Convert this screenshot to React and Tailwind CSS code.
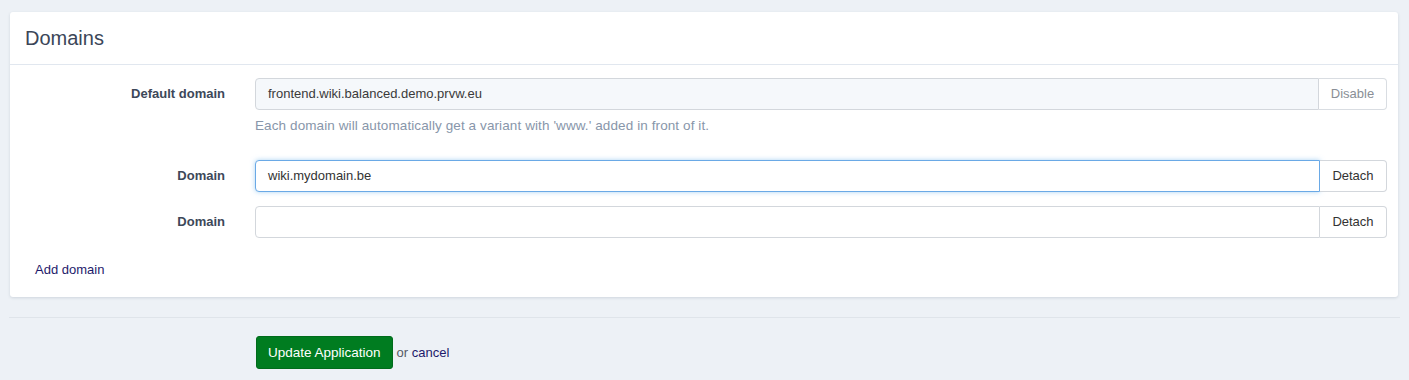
import React from "react";

export default function App() {
  const font = { fontFamily: '"Liberation Sans", Arial, Helvetica, sans-serif' };
  return (
    <div className="w-[1409px] h-[380px] bg-[#edf1f6] text-[13px] text-[#333]" style={font}>
      <div className="pt-[12px] px-[10px] pr-[11px]">
        <div className="bg-white rounded-[3px] shadow-[0_1px_3px_rgba(40,60,90,0.15)]">
          <div className="h-[53px] border-b border-[#e1e7ef] flex items-center pl-[15px]">
            <h2 className="text-[20px] text-[#3b4658] leading-none">Domains</h2>
          </div>
          <div className="pt-[13px] pb-[19px]">
            <div className="flex items-start">
              <label className="w-[215px] text-right font-bold text-[#3d4859] leading-[32px]">Default domain</label>
              <div className="ml-[30px] flex-1 mr-[11px]">
                <div className="flex h-[32px]">
                  <div className="flex-1 border border-[#d3d7dc] rounded-l-[4px] bg-[#f5f8fb] pl-[12px] flex items-center text-[#3a3a3a]">
                    frontend.wiki.balanced.demo.prvw.eu
                  </div>
                  <button className="w-[68px] border border-l-0 border-[#d9dde2] rounded-r-[4px] bg-white text-[#8a8f96] text-[13px]">Disable</button>
                </div>
                <p className="mt-[8px] text-[13.5px] tracking-[0.1px] text-[#8896aa] leading-[15px]">Each domain will automatically get a variant with 'www.' added in front of it.</p>
              </div>
            </div>
            <div className="flex items-start mt-[27px]">
              <label className="w-[215px] text-right font-bold text-[#3d4859] leading-[32px]">Domain</label>
              <div className="ml-[30px] flex-1 mr-[11px] flex h-[32px]">
                <div className="flex-1 border border-[#6aa9e6] rounded-l-[4px] bg-white pl-[12px] flex items-center text-[#333] shadow-[0_0_5px_rgba(102,175,233,0.55)]">
                  wiki.mydomain.be
                </div>
                <button className="w-[67px] border border-[#d3d7dc] border-l-0 rounded-r-[4px] bg-white text-[#333] text-[13px]">Detach</button>
              </div>
            </div>
            <div className="flex items-start mt-[14px]">
              <label className="w-[215px] text-right font-bold text-[#3d4859] leading-[32px]">Domain</label>
              <div className="ml-[30px] flex-1 mr-[11px] flex h-[32px]">
                <div className="flex-1 border border-[#d3d7dc] rounded-l-[4px] bg-white"></div>
                <button className="w-[67px] border border-[#d3d7dc] border-l-0 rounded-r-[4px] bg-white text-[#333] text-[13px]">Detach</button>
              </div>
            </div>
            <div className="pl-[25px] mt-[24px] leading-[16px]">
              <a className="text-[#1d1a6b] cursor-pointer">Add domain</a>
            </div>
          </div>
        </div>
      </div>
      <div className="mx-[9px] mt-[20px] border-t border-[#dfe4ea]"></div>
      <div className="flex items-center pl-[256px] pt-[18px]">
        <button className="h-[33px] px-[11px] pt-[1px] bg-[#007c20] rounded-[3px] text-white text-[13.5px] border border-[#006b1b]">Update Application</button>
        <span className="ml-[4px] text-[#555b66]">or <a className="text-[#1d1a6b] cursor-pointer">cancel</a></span>
      </div>
    </div>
  );
}
